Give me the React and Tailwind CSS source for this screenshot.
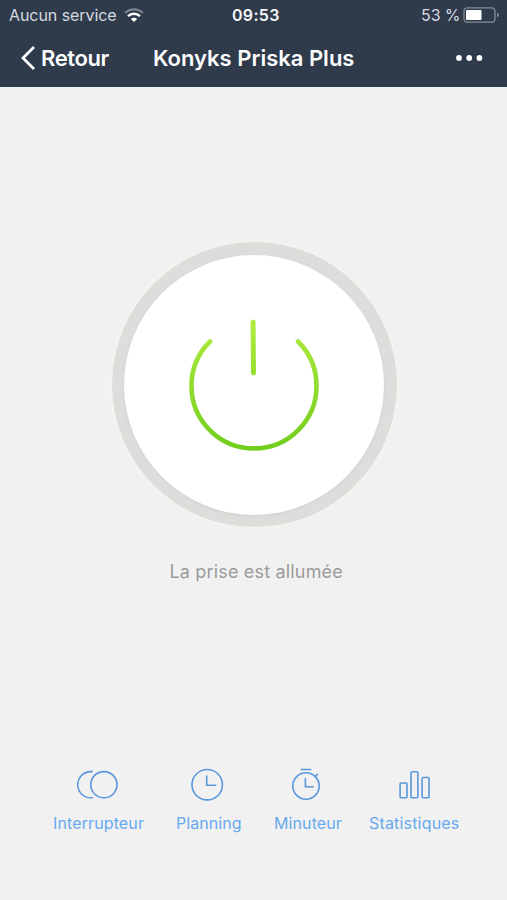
import React from "react";

function StatusBar() {
  return (
    <div className="flex h-[30px] items-center text-[16px] leading-[30px] text-[#d5dae1]">
      <span className="ml-[9px] w-[108px] whitespace-nowrap tracking-[-0.07px]">Aucun service</span>
      <svg className="ml-[7px] h-[14px] w-[20px]" viewBox="0 0 20 14" fill="none">
        <path d="M1.2 4.9C6.2.1 13.8.1 18.8 4.9" stroke="#7b8491" strokeWidth="2.2" />
        <path d="M4 8.2C7.4 5 12.6 5 16 8.2" stroke="#fff" strokeWidth="2.5" />
        <path d="M6.9 10.9C8.7 9.4 11.3 9.4 13.1 10.9L10 14Z" fill="#fff" />
      </svg>
      <span className="ml-[88px] w-[48px] whitespace-nowrap text-[16px] font-semibold tracking-[0.3px] text-[#f4f6f8]">09:53</span>
      <span className="ml-[141px] w-[39px] whitespace-nowrap tracking-[-0.1px]">53 %</span>
      <svg className="ml-[3px] h-[16px] w-[37px]" viewBox="0 0 37 16" fill="none">
        <rect x="1" y=".8" width="31" height="14.4" rx="3.5" stroke="#858d99" strokeWidth="1.3" />
        <rect x="3" y="3" width="15.5" height="10" rx="1" fill="#fff" />
        <path d="M34 5.5c2.4.8 2.4 4.2 0 5Z" fill="#858d99" />
      </svg>
    </div>
  );
}

function NavBar() {
  return (
    <div className="flex h-[57px] items-center pb-[1px] text-[22px] font-semibold leading-[56px] text-[#fbfcfd]">
      <svg className="ml-[20px] h-[26px] w-[16px]" viewBox="0 0 16 26" fill="none">
        <path d="M14 2 3 13l11 11" stroke="#fff" strokeWidth="2.8" />
      </svg>
      <span className="ml-[5px] w-[68px] whitespace-nowrap tracking-[-0.4px]">Retour</span>
      <span className="ml-[44px] w-[202px] whitespace-nowrap">Konyks Priska Plus</span>
      <svg className="ml-[100px] h-[8px] w-[28px]" viewBox="0 0 28 8" fill="#fff">
        <circle cx="4" cy="4" r="2.9" />
        <circle cx="14.2" cy="4" r="2.9" />
        <circle cx="24.4" cy="4" r="2.9" />
      </svg>
    </div>
  );
}

function PowerButton() {
  return (
    <button className="flex size-[285px] items-center justify-center rounded-full bg-[#dbdedb] shadow-[0_0_3px_1px_#f5f6ee]">
      <span className="flex size-[260px] items-center justify-center rounded-full bg-white shadow-[0_1px_3px_#cfd3cb]">
        <svg className="size-[140px]" viewBox="184 315 140 140" fill="none" strokeLinecap="round">
          <defs>
            <linearGradient id="power" x1="0" y1="320" x2="0" y2="450" gradientUnits="userSpaceOnUse">
              <stop stopColor="#b0ec41" />
              <stop offset="1" stopColor="#72cd1c" />
            </linearGradient>
          </defs>
          <path d="M210 341.5A62.5 62.5 0 1 0 298 341.5" stroke="url(#power)" strokeWidth="4.6" />
          <path d="M253.1 322L253.5 373" stroke="url(#power)" strokeWidth="5" />
        </svg>
      </span>
    </button>
  );
}

const actions = [
  {
    label: "Interrupteur",
    column: "w-[91px]",
    spacing: "tracking-[0.12px]",
    viewBox: "76.5 765 44 38",
    drawing: (
      <>
        <circle cx="103.4" cy="784.7" r="13.1" />
        <path d="M91.7 771.6H90.3A13.1 13.1 0 0 0 90.3 797.8H91.7" />
      </>
    ),
  },
  {
    label: "Planning",
    column: "ml-[32px] w-[65px]",
    spacing: "tracking-[0.05px]",
    viewBox: "186.5 765 44 38",
    drawing: (
      <>
        <circle cx="206.7" cy="784.7" r="15.2" />
        <path d="M206.2 776V785.3H215.2" />
      </>
    ),
  },
  {
    label: "Minuteur",
    column: "ml-[33px] w-[68px]",
    spacing: "tracking-[0.1px]",
    viewBox: "286 765 44 38",
    drawing: (
      <>
        <circle cx="306" cy="786" r="13.2" />
        <path d="M301.2 769.5H310.8M305.4 778.5V786.8H313.2M315.3 776.5L317.6 774.2" />
      </>
    ),
  },
  {
    label: "Statistiques",
    column: "ml-[27px] w-[90px]",
    spacing: "tracking-[0.18px]",
    viewBox: "392 765 44 38",
    drawing: (
      <>
        <rect x="400.1" y="783" width="6.9" height="14.8" rx="1" />
        <rect x="411" y="771.7" width="6.9" height="26.1" rx="1" />
        <rect x="422.1" y="777.5" width="6.9" height="20.3" rx="1" />
      </>
    ),
  },
];

export default function App() {
  return (
    <div className="flex h-[900px] w-[507px] flex-col overflow-hidden bg-[#f1f1f1] font-['Inter',sans-serif]">
      <header className="h-[87px] bg-[#2f3a4b]">
        <StatusBar />
        <NavBar />
      </header>
      <main className="flex flex-col items-center pt-[155px] pl-[1px]">
        <PowerButton />
        <p className="mt-[33px] ml-[5px] h-[24px] w-[174px] whitespace-nowrap text-[18px] leading-[24px] tracking-[0.17px] text-[#9b9b9b]">
          La prise est allumée
        </p>
      </main>
      <nav className="mt-[181px] flex pl-[53px]">
        {actions.map((a) => (
          <div key={a.label} className={`flex flex-col items-center ${a.column}`}>
            <svg className="h-[38px] w-[44px] shrink-0" viewBox={a.viewBox} fill="none" stroke="#5a97dc" strokeWidth="1.6" strokeLinecap="round">
              {a.drawing}
            </svg>
            <span className={`mt-[10px] w-full whitespace-nowrap text-[16px] leading-[20px] text-[#67a9ee] ${a.spacing}`}>{a.label}</span>
          </div>
        ))}
      </nav>
    </div>
  );
}
